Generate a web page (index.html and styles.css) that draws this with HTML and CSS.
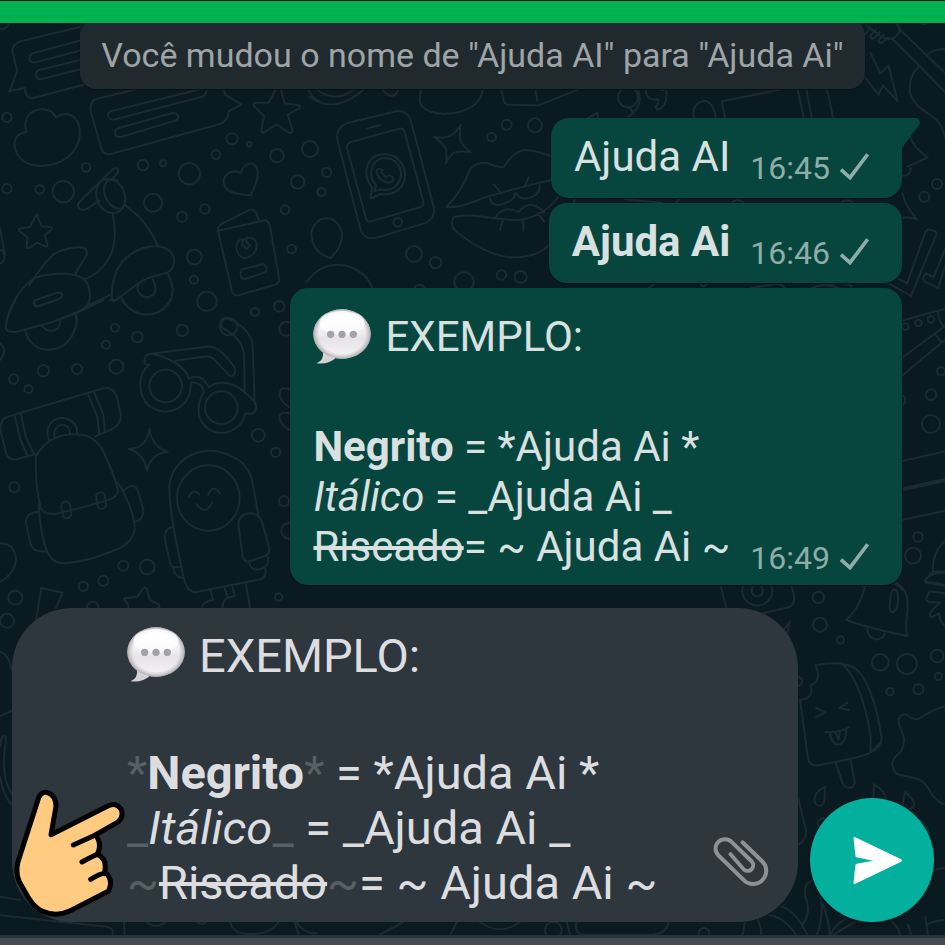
FILE: index.html
```html
<!DOCTYPE html>
<html lang="pt-BR">
<head>
<meta charset="utf-8">
<meta name="viewport" content="width=device-width, initial-scale=1">
<title>Ajuda Ai</title>
<link rel="stylesheet" href="styles.css">
</head>
<body>
<svg class="wallpaper" viewBox="0 0 945 945" preserveAspectRatio="xMinYMin slice" aria-hidden="true">
  <defs>
    <linearGradient id="balloon" x1="0" y1="0" x2="0" y2="1">
      <stop offset="0" stop-color="#ffffff"/><stop offset=".35" stop-color="#f6f5f7"/><stop offset=".6" stop-color="#e6e4e7"/><stop offset="1" stop-color="#f4f3f4"/>
    </linearGradient>
    <radialGradient id="balloon-edge" cx=".5" cy=".5" r=".5">
      <stop offset=".8" stop-color="#b9b5b9" stop-opacity="0"/><stop offset="1" stop-color="#aaa6aa" stop-opacity=".9"/>
    </radialGradient>
    <symbol id="speech" viewBox="0 0 174 168">
      <path d="M30 128Q34 152 11 163Q46 168 72 144Z" fill="#d5d2d5"/>
      <ellipse cx="87" cy="75" rx="86" ry="74" fill="url(#balloon)"/>
      <ellipse cx="87" cy="75" rx="86" ry="74" fill="url(#balloon-edge)"/>
      <ellipse cx="87" cy="42" rx="68" ry="36" fill="#fff" opacity=".8"/>
      <g fill="#a3a1aa"><circle cx="53" cy="76" r="11"/><circle cx="87" cy="76" r="11"/><circle cx="121" cy="76" r="11"/></g>
    </symbol>
    <symbol id="tick" viewBox="0 0 90 84"><path d="M6 53L33 77L86 7" fill="none" stroke="currentColor" stroke-width="11"/></symbol>
  </defs>
  <!-- top left: chat cards, cloud, scooter, passport -->
  <g transform="scale(.33333)">
    <path d="M0 86Q16 92 28 70M242 80L62 124Q34 134 38 158L52 212L28 274L74 264Q78 298 100 294L250 254M240 122L98 160Q84 166 90 182Q94 190 106 187L240 152M240 180L116 211Q104 217 109 230Q113 240 126 237L240 208"/>
    <path d="M410 268L290 296Q268 306 272 334L304 446Q312 466 332 462L660 372Q684 362 686 334L724 314L676 284L672 270M600 268L332 334Q320 342 326 352Q332 362 346 358L606 290Q620 286 620 268M354 385L514 340Q530 337 535 348Q536 358 526 362L362 411Q346 412 344 398Q344 389 354 385Z"/>
    <path d="M80 396C66 354 92 328 128 328Q156 328 168 352C194 334 228 340 238 380C246 430 220 470 170 490C110 508 60 494 46 450C38 418 50 400 80 396Z"/>
    <path d="M828 268L806 308L764 308Q758 314 764 320L792 348L784 392Q784 400 792 397L830 373L868 399Q878 400 877 390L864 344L898 325Q904 318 896 316L854 310L842 268M924 268Q936 294 960 305"/>
    <path d="M722 519C734 486 764 480 772 510C776 536 766 558 752 586C726 582 694 584 676 562C660 530 690 504 722 519Z"/>
    <path d="M110 643L90 680L58 686Q54 690 60 694L82 712L80 742Q84 746 90 742L112 728L138 741Q144 740 142 732L134 706L156 687Q156 681 150 681L124 678Z"/>
    <path d="M298 602L260 627Q240 634 234 618Q234 608 242 602L338 508Q350 500 354 508Q356 516 350 522L334 540"/>
    <ellipse cx="332" cy="588" rx="42" ry="53" transform="rotate(-22 332 588)"/><path d="M352 540Q330 536 320 545Q302 570 324 605Q342 630 368 626"/>
    <path d="M338 638Q356 730 324 780Q296 824 252 838M376 616Q440 660 474 738M20 960C38 900 70 850 110 832C170 814 230 820 252 838Q274 860 268 900Q262 924 252 926M88 856Q130 790 162 762C190 746 232 738 252 744Q264 750 260 764L224 824M252 922L332 884M170 960Q220 942 252 926M226 940L230 960M108 900L172 878Q184 875 187 886Q186 892 180 895L114 920Q102 922 101 910Q100 904 108 900Z"/>
    <path d="M336 902C332 840 350 770 430 744C470 732 514 740 522 776Q526 804 502 818C450 832 440 832 410 854L348 900Q340 906 336 902ZM502 818Q530 870 508 906C470 960 396 956 364 892M458 838Q476 870 456 888C434 900 406 880 414 854"/>
    <path d="M654 690Q652 680 664 672L750 629Q768 624 776 660M654 692L794 661Q806 662 810 680L838 838Q838 848 826 854L716 886Q702 888 696 874ZM732 718Q710 716 709 742C712 768 728 778 744 772C766 764 774 744 768 724Q758 710 740 714L738 722L750 738L740 746L726 736L730 718M728 808L786 793Q798 794 800 806Q800 814 794 817L736 837Q724 838 722 824Q720 812 728 808Z"/>
    <circle cx="21" cy="352" r="14"/><circle cx="21" cy="566" r="14"/><circle cx="119" cy="568" r="13"/><circle cx="190" cy="575" r="32"/><circle cx="258" cy="502" r="13"/><circle cx="429" cy="495" r="16"/><circle cx="489" cy="490" r="9"/><circle cx="568" cy="521" r="32"/><circle cx="459" cy="608" r="27"/><circle cx="546" cy="650" r="15"/><circle cx="615" cy="627" r="14"/><circle cx="648" cy="464" r="13"/><circle cx="696" cy="416" r="17"/><circle cx="748" cy="433" r="7"/><circle cx="831" cy="467" r="20"/><circle cx="930" cy="447" r="24"/><circle cx="893" cy="546" r="20"/><circle cx="855" cy="629" r="13"/><circle cx="875" cy="747" r="13"/><circle cx="583" cy="771" r="22"/><circle cx="582" cy="839" r="12"/><circle cx="621" cy="904" r="29"/><circle cx="765" cy="936" r="12"/><circle cx="838" cy="919" r="16"/><circle cx="964" cy="576" r="13"/><circle cx="686" cy="980" r="26"/>
    <path d="M0 686L14 760Q16 788 0 790M0 750Q12 748 12 764"/>
  </g>
  <!-- top centre: phone, lips, sparkle -->
  <g transform="translate(310) scale(.33333)">
    <path d="M0 290Q70 346 162 268M22 270Q76 310 134 268M218 268Q230 288 246 288Q260 286 264 268M334 268C318 316 340 338 400 341C460 342 516 316 518 268M574 270L582 306L590 314L686 316L806 268M676 268L682 302"/>
    <path d="M112 369L262 333Q292 332 302 360L372 624Q376 652 350 668L200 713Q164 722 152 690L82 420Q76 384 112 369ZM122 426L268 386Q280 384 284 396L340 604Q342 618 330 622L184 664Q172 668 168 656L112 448Q108 432 122 426ZM170 386L210 376"/>
    <circle cx="263" cy="667" r="13"/>
    <path d="M182 596L186 562C148 512 178 462 226 462C278 466 298 520 276 558C254 584 232 586 212 582ZM194 574L198 556C166 516 190 474 228 474C270 478 284 520 264 550C246 572 230 572 210 568ZM206 506C192 514 204 534 218 542C234 552 252 548 250 532L236 526L228 532L214 518L218 510Z"/>
    <path d="M452 374C446 410 446 432 482 456C444 452 426 450 408 490C414 448 408 436 372 411C414 418 432 408 452 374Z"/>
    <path d="M410 620Q450 582 480 510Q500 480 540 492Q574 506 582 500C600 476 616 450 650 450Q700 456 740 476M410 620Q440 628 520 594Q630 560 740 536M552 554L574 580M656 532L644 560M540 596Q546 618 568 614Q612 606 616 580M620 580Q626 600 656 594Q688 588 690 556M430 652C480 634 570 664 630 660Q712 646 752 580M430 652Q420 680 440 696C510 752 580 780 640 770Q690 764 716 736M556 652Q580 614 626 636Q660 592 704 638M578 662L570 690M640 662L640 692M684 640L702 664"/>
    <circle cx="50" cy="517" r="14"/><circle cx="35" cy="576" r="12"/><path d="M4 700C16 640 82 640 96 700Q98 740 62 774Q6 760 4 700ZM-10 846C40 770 150 780 188 864M792 608L796 592"/>
    <circle cx="312" cy="762" r="24"/><circle cx="377" cy="788" r="17"/><circle cx="462" cy="846" r="29"/><circle cx="328" cy="870" r="16"/><circle cx="574" cy="825" r="14"/><circle cx="632" cy="831" r="18"/><circle cx="545" cy="411" r="13"/><circle cx="590" cy="374" r="15"/><circle cx="675" cy="376" r="21"/><circle cx="954" cy="292" r="30"/><path d="M828 358L862 338L864 358"/>
  </g>
  <!-- top right: guitar, bolt, sparkle -->
  <g transform="translate(625) scale(.33333)">
    <path d="M40 270Q56 322 10 350M0 322Q22 320 22 340M108 270L124 270Q130 320 96 330L92 320Q102 312 100 298Q64 304 62 270M206 352Q200 310 238 302Q266 306 272 352M300 352L290 304L470 268M518 268L536 352M544 268L560 352M606 268L624 352"/>
    <path d="M736 158L766 220L790 196L818 304L774 256L760 284L718 230M724 76L776 114Q800 124 818 104Q832 86 812 68M736 84L722 102M752 90L736 108Q736 120 748 114L764 96M776 104L760 122Q764 134 774 126L790 112M800 114L960 276M822 86L960 218M904 166Q930 144 960 148M880 202Q848 230 856 282C880 350 944 330 960 412M886 68Q894 76 906 70M852 404Q870 450 908 472L848 500M826 526Q856 532 858 504M832 580Q842 620 876 658Q848 648 828 656M788 848L858 888L934 704Q936 694 926 692L912 688Q904 690 900 700L846 850L820 836M960 800L940 864L900 846Q892 838 896 828L904 820L926 832L960 748"/>
    <circle cx="936" cy="552" r="15"/><circle cx="898" cy="590" r="15"/><path d="M0 598L110 608M154 608L168 592M322 606Q338 596 354 606M650 606Q668 596 682 606M70 864L90 852M226 852Q236 866 246 852M380 864L450 852Q470 850 480 864M560 864Q600 846 640 864"/>
  </g>
  <!-- left: bedroll, backpack, glasses, astronaut -->
  <g transform="translate(0 300) scale(.33333)">
    <path d="M46 0Q14 60 18 86Q22 98 48 96L150 68Q220 46 310 0M104 0Q96 18 116 18L170 0M76 94C94 164 184 168 218 104Q236 66 228 42M126 76C144 102 178 96 180 66M366 0C400 56 480 60 512 0M330 0L344 0M0 130Q24 152 0 180"/>
    <path d="M24 350L312 264Q338 260 350 290L362 340Q366 376 330 390L284 410M24 350Q-2 358 2 392L18 458Q24 480 50 478L108 462M44 348L62 420L82 466M62 342L78 412L100 458M264 282L292 350L298 404M282 276L310 344L314 394M148 420C130 380 160 352 188 354C216 356 236 378 230 402M164 412C154 372 208 356 210 402"/>
    <path d="M108 468C144 406 200 400 244 404Q284 408 308 450Q340 516 354 570Q352 590 330 598Q240 626 164 642Q130 644 122 622C110 576 106 520 108 468ZM354 548Q404 630 404 690Q400 722 360 744Q260 788 186 790Q152 788 136 740Q120 690 116 612M114 636Q76 638 78 670L92 734Q100 758 138 754M368 574Q402 542 414 574L430 628Q432 660 404 666"/>
    <rect x="186" y="604" width="26" height="50" rx="13" transform="rotate(-8 200 630)"/><rect x="290" y="577" width="26" height="50" rx="13" transform="rotate(-8 303 602)"/>
    <path d="M448 386Q456 442 504 455Q450 462 441 512Q432 460 386 447Q440 446 448 386Z"/>
    <circle cx="497" cy="258" r="49"/><circle cx="664" cy="323" r="49"/>
    <path d="M448 194Q430 196 434 176Q440 156 470 164C520 178 560 208 566 236Q606 216 626 262C660 236 704 250 736 278Q758 298 766 308Q774 334 754 342L736 340C722 410 624 422 598 350Q590 310 612 276Q606 244 572 248C576 330 494 356 446 316C410 280 414 220 448 194ZM446 162L620 140Q650 138 674 166Q704 196 706 212Q704 232 688 226L640 176Q630 168 610 170L526 182M734 278L732 160Q722 110 668 84Q656 68 666 58Q676 50 696 60Q758 96 758 140L764 312"/>
    <ellipse cx="625" cy="594" rx="94" ry="98"/>
    <path d="M566 590Q582 562 598 584M624 584Q640 550 660 580M590 612Q616 650 636 608M550 828Q508 640 508 560C516 480 590 440 660 456Q740 476 756 540L776 650M550 828Q560 880 590 876L780 838Q800 832 796 806M522 680Q488 684 496 724L512 796Q516 804 540 800M520 804Q524 832 548 834M716 680Q712 644 748 640Q776 640 786 666L808 744Q808 766 790 770L748 784Q732 786 728 770ZM748 790Q752 812 780 808Q808 800 804 772M632 872L640 900Q608 904 604 924M674 866L684 894Q666 900 668 924M698 862L704 888L680 894M738 852L750 924"/>
    <circle cx="345" cy="83" r="12"/><circle cx="318" cy="134" r="12"/><circle cx="412" cy="111" r="16"/><circle cx="547" cy="91" r="17"/><circle cx="349" cy="200" r="21"/><circle cx="231" cy="207" r="15"/><circle cx="130" cy="212" r="17"/><circle cx="41" cy="237" r="14"/><circle cx="85" cy="268" r="12"/><circle cx="43" cy="562" r="15"/><circle cx="775" cy="406" r="19"/><circle cx="827" cy="457" r="14"/><circle cx="852" cy="604" r="15"/><circle cx="868" cy="692" r="24"/><circle cx="859" cy="86" r="21"/><circle cx="370" cy="797" r="15"/><circle cx="442" cy="801" r="22"/><circle cx="310" cy="842" r="15"/><circle cx="250" cy="859" r="14"/><circle cx="278" cy="922" r="17"/><circle cx="46" cy="893" r="21"/><circle cx="836" cy="891" r="11"/><circle cx="21" cy="962" r="21"/>
    <path d="M870 268Q834 256 840 290Q848 312 870 322M870 340Q832 332 840 360Q850 384 870 390M0 730Q44 730 48 776Q46 820 0 846M108 960L124 864L188 878L168 924M384 926Q388 914 372 898Q372 892 384 894L412 890L432 862Q440 862 442 872L450 900L478 914Q482 922 470 924"/>
  </g>
  <!-- bottom left edge -->
  <g transform="translate(0 600) scale(.33333)">
    <path d="M0 156Q24 160 36 210M0 348L40 330M0 440Q4 400 16 408Q20 420 14 450Q4 540 40 590M0 530Q10 590 40 620M0 890L60 900M0 946L320 980Q342 984 338 1002M372 966L374 1004M440 966Q470 990 496 966M590 966Q606 976 620 966M690 966Q700 1004 750 1002Q810 1004 836 966M884 966L896 1004M890 966Q910 1002 950 1000M1140 1004L1210 966M1370 966L1352 1004M1440 966Q1500 1010 1560 966M1700 966L1710 1004M1730 966Q1720 1000 1750 1004H1960Q2000 1000 2006 966"/>
    <circle cx="1660" cy="990" r="25"/>
  </g>
  <!-- bottom right: bell, ice lolly, drops, leaves -->
  <g transform="translate(690 570) scale(.33333)">
    <circle cx="202" cy="62" r="45"/><circle cx="202" cy="62" r="17"/>
    <path d="M92 48L108 112M304 48Q324 100 296 112L218 130M282 178L300 154L292 188M526 48Q506 120 468 150Q540 176 652 198C640 166 660 120 650 76Q640 50 618 38M532 178C536 218 580 214 584 192M612 58Q624 60 624 80Q624 128 606 126Q596 122 600 100Q602 60 612 58ZM765 10Q736 0 706 30Q706 40 740 38L765 46M765 70L720 64Q700 90 716 96L750 98Q710 130 724 142L748 130Q746 150 765 170"/>
    <path d="M330 390L354 566Q360 590 384 586C450 574 520 560 542 548Q580 526 574 500C560 400 530 320 494 294Q450 270 376 286Q398 330 362 346Q374 384 330 390ZM450 278C500 310 530 420 542 500L542 548M542 548L570 520M378 414L406 427L378 442M472 398L448 414L476 420M406 486Q444 490 476 472M420 488C424 538 470 536 468 480M438 490L446 508L450 486M438 580L456 636C466 662 494 656 494 636L482 572"/>
    <path d="M405 650L404 688C402 716 370 712 374 684Q376 666 405 650ZM552 642L550 692L588 692Q592 670 552 642ZM646 666Q636 700 640 712Q658 728 674 704Q670 686 646 666ZM765 410Q740 412 684 448Q664 448 650 434Q624 430 626 460C644 500 648 520 632 546C600 570 602 590 620 612C670 626 690 620 712 650Q740 700 765 702M690 750Q718 770 716 800M324 684L348 780Q350 816 322 824M732 902Q744 894 765 894"/>
    <circle cx="385" cy="82" r="17"/><circle cx="390" cy="164" r="21"/><circle cx="451" cy="210" r="11"/><circle cx="571" cy="277" r="25"/><circle cx="651" cy="282" r="30"/><circle cx="741" cy="258" r="19"/><circle cx="745" cy="319" r="11"/><circle cx="685" cy="358" r="15"/><circle cx="600" cy="365" r="11"/><circle cx="322" cy="334" r="14"/><circle cx="398" cy="760" r="15"/><circle cx="42" cy="1090" r="16"/>
    <path d="M164 1060L158 1096M204 1050Q216 1080 212 1096M240 1036Q280 1040 320 1096M276 1010Q320 1024 352 1096M366 932Q340 940 346 980C364 1020 348 1050 338 1062M388 950Q406 1030 380 1096M398 1000Q414 1040 420 1096M420 1094Q440 1060 470 1046M430 1096Q450 1080 496 1056M600 1050Q626 1070 630 1096M654 1064L664 1096M706 1040L714 1096M712 1064Q730 1052 765 1050"/>
  </g>
  <!-- right edge -->
  <g transform="translate(785 270) scale(.33333)">
    <path d="M350 152L480 116M350 264L480 168M350 318L480 210M460 122Q458 152 476 168M450 192L468 216M350 574L480 544M350 750L480 722M480 812Q440 850 444 904L420 930Q420 942 436 940L480 948M444 904L480 906M232 948Q240 936 254 948M320 940Q336 940 352 960M80 42Q112 30 140 42Q170 34 200 48"/>
    <path d="M360 656L480 630" stroke-width="12"/>
    <circle cx="361" cy="170" r="10"/><circle cx="400" cy="159" r="10"/><circle cx="438" cy="148" r="10"/><circle cx="468" cy="304" r="12"/><circle cx="438" cy="374" r="16"/><circle cx="438" cy="462" r="27"/><circle cx="345" cy="391" r="16"/><circle cx="399" cy="801" r="14"/><circle cx="384" cy="857" r="24"/>
  </g>
</svg>

<header class="topbar"></header>

<main class="chat">
  <p class="notice">Você mudou o nome de "Ajuda AI" para "Ajuda Ai"</p>

  <article class="bubble bubble-tail">
    <p class="text">Ajuda AI</p>
    <p class="meta"><time>16:45</time><svg class="tick" role="img" aria-label="Enviada"><use href="#tick"/></svg></p>
    <svg class="tail" viewBox="0 0 57 93" aria-hidden="true"><path d="M0 0H44Q62 4 54 22L0 93Z" fill="currentColor"/></svg>
  </article>

  <article class="bubble">
    <p class="text"><b>Ajuda Ai</b></p>
    <p class="meta"><time>16:46</time><svg class="tick" role="img" aria-label="Enviada"><use href="#tick"/></svg></p>
  </article>

  <article class="bubble bubble-long">
    <div class="text">
      <p class="title"><svg class="emoji" role="img" aria-label="Balão de fala"><use href="#speech"/></svg>EXEMPLO:</p>
      <p><br></p>
      <p><b>Negrito</b> = *Ajuda Ai *</p>
      <p><i>Itálico</i> = _Ajuda Ai _</p>
      <p><s>Riscado</s>= ~ Ajuda Ai ~</p>
    </div>
    <p class="meta"><time>16:49</time><svg class="tick" role="img" aria-label="Enviada"><use href="#tick"/></svg></p>
  </article>
</main>

<form class="composer">
  <div class="field">
    <div class="input" role="textbox" aria-multiline="true" aria-label="Mensagem" contenteditable="true" spellcheck="false">
      <p class="title"><svg class="emoji" role="img" aria-label="Balão de fala"><use href="#speech"/></svg>EXEMPLO:</p>
      <p><br></p>
      <p><span class="mark">*</span><b>Negrito</b><span class="mark">*</span> = *Ajuda Ai *</p>
      <p><span class="mark">_</span><i>Itálico</i><span class="mark">_</span> = _Ajuda Ai _</p>
      <p><span class="mark">~</span><s>Riscado</s><span class="mark">~</span>= ~ Ajuda Ai ~</p>
    </div>
    <button class="attach" type="button" aria-label="Anexar">
      <svg viewBox="38 48 175 158" aria-hidden="true"><path d="M130 69L190 127A39.500 39.500 0 0 1 134 183L57 108A28 28 0 0 1 97 68L158 127A17 17 0 0 1 134 151L94 105" fill="none" stroke="currentColor" stroke-width="12" stroke-linecap="round"/></svg>
    </button>
  </div>
  <button class="send" type="button" aria-label="Enviar">
    <svg viewBox="360 690 371 371" aria-hidden="true"><path d="M494 811L631 877L494 943L500 891L570 878L500 863Z" fill="#fff" stroke="#fff" stroke-width="8" stroke-linejoin="round"/></svg>
  </button>
  <svg class="hand" viewBox="36 20 348 396" aria-hidden="true">
    <path d="M116 52Q124 34 140 36Q168 44 168 78L153 163L328 75Q350 66 364 88Q372 112 352 126L286 164Q308 190 292 222Q322 234 314 276Q342 296 326 332L214 390Q170 412 126 392Q104 382 84 350L58 304Q46 280 54 244Z" fill="#ffcb80" stroke="#000" stroke-width="15" stroke-linejoin="round"/>
    <path d="M288 163L220 194M292 222Q280 226 246 245M314 280Q304 278 272 297" fill="none" stroke="#000" stroke-width="15" stroke-linecap="round"/>
  </svg>
</form>

<footer class="navbar"></footer>
</body>
</html>
```
FILE: styles.css
```css
* {
  box-sizing: border-box;
}

body {
  position: relative;
  display: flex;
  flex-direction: column;
  min-height: 100vh;
  margin: 0;
  overflow-x: hidden;
  background: #0a1a21;
  color: #d9e1e0;
  font-family: Roboto, "Liberation Sans", sans-serif;
  font-size: 42px;
  line-height: 50px;
}

p {
  margin: 0;
}

button {
  padding: 0;
  border: 0;
  background: none;
  cursor: pointer;
}

svg {
  display: block;
}

.wallpaper {
  position: absolute;
  z-index: -1;
  inset: 0;
  width: 100%;
  height: 100%;
  fill: none;
  stroke: #1c2a31;
  stroke-width: 6;
  stroke-linecap: round;
  stroke-linejoin: round;
}

.wallpaper symbol {
  stroke: none;
}

.topbar {
  position: relative;
  z-index: 1;
  height: 23px;
  border-top: 1px solid #10141f;
  background: #00b150;
}

.chat {
  display: flex;
  flex: 1;
  flex-direction: column;
  align-items: flex-end;
  gap: 5px;
  padding: 0 43px 22px;
}

.notice {
  align-self: center;
  margin: -4px 0 24px;
  padding: 11px 21px 9px;
  border-radius: 16px;
  background: #20292e;
  box-shadow: 0 1px 1px #071217;
  color: #9fa4a6;
  font-size: 34px;
}

.bubble {
  position: relative;
  display: flex;
  align-items: flex-end;
  gap: 20px;
  padding: 14px 33px 16px 23px;
  border-radius: 18px;
  background: #06463f;
  box-shadow: 0 1px 1px #071217;
}

.bubble-tail {
  border-top-right-radius: 0;
}

.bubble-long {
  padding-top: 21px;
  padding-bottom: 13px;
}

.tail {
  position: absolute;
  top: 0;
  right: -18px;
  width: 19px;
  height: 31px;
  color: #06463f;
}

.title {
  display: flex;
  align-items: center;
  gap: 14px;
  margin-bottom: 7px;
}

.emoji {
  width: 58px;
  height: 56px;
}

.meta {
  display: flex;
  align-items: center;
  gap: 9px;
  margin-bottom: -6px;
  color: #8fada8;
  font-size: 32px;
  line-height: 40px;
}

.tick {
  width: 30px;
  height: 28px;
  margin-bottom: 4px;
}

.composer {
  position: relative;
  display: flex;
  align-items: flex-end;
  gap: 12px;
  padding: 0 11px 13px 12px;
}

.field {
  display: flex;
  flex: 1;
  align-items: flex-end;
  padding: 19px 28px 12px 115px;
  border-radius: 60px;
  background: #2d373d;
  color: #dddde0;
  font-size: 47px;
  line-height: 55px;
}

.input {
  flex: 1;
  outline: 0;
}

.mark {
  color: #556067;
}

.attach {
  margin-bottom: 22px;
  color: #8c9296;
}

.attach svg {
  width: 58px;
  height: 53px;
}

.send {
  width: 124px;
  height: 124px;
  border-radius: 50%;
  background: #02b09d;
  box-shadow: 0 2px 3px #06141a;
}

.send svg {
  width: 100%;
  height: 100%;
}

.hand {
  position: absolute;
  bottom: 16px;
  left: 12px;
  width: 116px;
  height: 132px;
}

.navbar {
  height: 10px;
  border-top: 3px solid #2b3237;
  background: #444c51;
}
```
